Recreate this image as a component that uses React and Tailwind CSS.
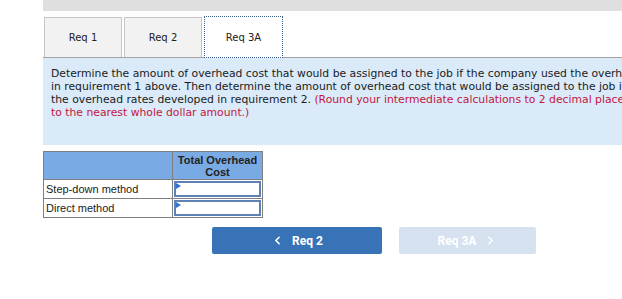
import { ChevronLeft, ChevronRight } from 'lucide-react';

const tabs = ['Req 1', 'Req 2', 'Req 3A'];

const rows = ['Step-down method', 'Direct method'];

function AnswerInput() {
    return (
        <div className="relative h-[16px] mx-px border-2 border-[#5f81b3] bg-white">
            <div className="absolute left-0 top-0 w-0 h-0 border-y-[3px] border-y-transparent border-l-[5px] border-l-[#2f74cf]" />
        </div>
    );
}

export default function App() {
    return (
        <div className="w-[622px] h-[299px] overflow-hidden bg-white">
            <div className="ml-[43px] w-[700px]">
                <div className="h-[11px] bg-[#dfdfdf]" />

                <div className="flex items-end h-[47px] pl-px border-b border-[#a3a3a3]">
                    {tabs.map((tab, i) => (
                        <div
                            key={tab}
                            className={
                                i === 2
                                    ? 'w-[79px] h-[42px] flex items-center justify-center bg-white border border-dotted border-[#3d5f8c] text-[#222] -mb-px'
                                    : 'w-[78px] h-[40px] mr-[2px] flex items-center justify-center bg-[#f2f2f2] border border-b-0 border-[#c6c6c6] text-[#222]'
                            }
                            style={{ fontFamily: '"DejaVu Sans", Verdana, sans-serif', fontSize: 10 }}
                        >
                            {tab}
                        </div>
                    ))}
                </div>

                <div
                    className="h-[87px] bg-[#daeaf8] pl-[8px] pt-[9px] text-[10.8px] leading-[13px] text-[#1b1b1b] whitespace-nowrap"
                    style={{ fontFamily: 'Tahoma, "DejaVu Sans", Verdana, sans-serif' }}
                >
                    <div>Determine the amount of overhead cost that would be assigned to the job if the company used the overhead rates developed</div>
                    <div>in requirement 1 above. Then determine the amount of overhead cost that would be assigned to the job if the company used</div>
                    <div>
                        the overhead rates developed in requirement 2.{' '}
                        <span className="text-[#c2163f]">(Round your intermediate calculations to 2 decimal places and final answers</span>
                    </div>
                    <div className="text-[#c2163f]">to the nearest whole dollar amount.)</div>
                </div>

                <table
                    className="mt-[6px] border-collapse text-[11px] text-[#1b1b1b]"
                    style={{ fontFamily: '"Liberation Sans", Arial, sans-serif' }}
                >
                    <thead>
                        <tr className="bg-[#7aaae3]">
                            <th className="w-[129px] h-[28px] border border-[#7f7f7f]" />
                            <th className="w-[90px] border border-[#7f7f7f] font-bold leading-[12px] text-[#222] align-middle">
                                Total Overhead
                                <br />
                                Cost
                            </th>
                        </tr>
                    </thead>
                    <tbody>
                        {rows.map((row) => (
                            <tr key={row}>
                                <td className="h-[19px] p-0 pl-[2px] border border-[#7f7f7f] text-left leading-[16px]">{row}</td>
                                <td className="h-[19px] p-0 border border-[#7f7f7f]">
                                    <AnswerInput />
                                </td>
                            </tr>
                        ))}
                    </tbody>
                </table>

                <div
                    className="flex gap-[17px] mt-[9px] ml-[169px] text-[12px] font-bold text-white"
                    style={{ fontFamily: 'Roboto, "Liberation Sans", Arial, sans-serif' }}
                >
                    <div className="w-[170px] h-[27px] rounded-[2px] bg-[#3873b8] flex items-center justify-center gap-[8px]">
                        <ChevronLeft className="w-[13px] h-[13px]" strokeWidth={3} />
                        <span>Req 2</span>
                    </div>
                    <div className="w-[137px] h-[27px] rounded-[2px] bg-[#d6e2f0] flex items-center justify-center gap-[8px]">
                        <span>Req 3A</span>
                        <ChevronRight className="w-[13px] h-[13px]" strokeWidth={3} />
                    </div>
                </div>
            </div>
        </div>
    );
}
